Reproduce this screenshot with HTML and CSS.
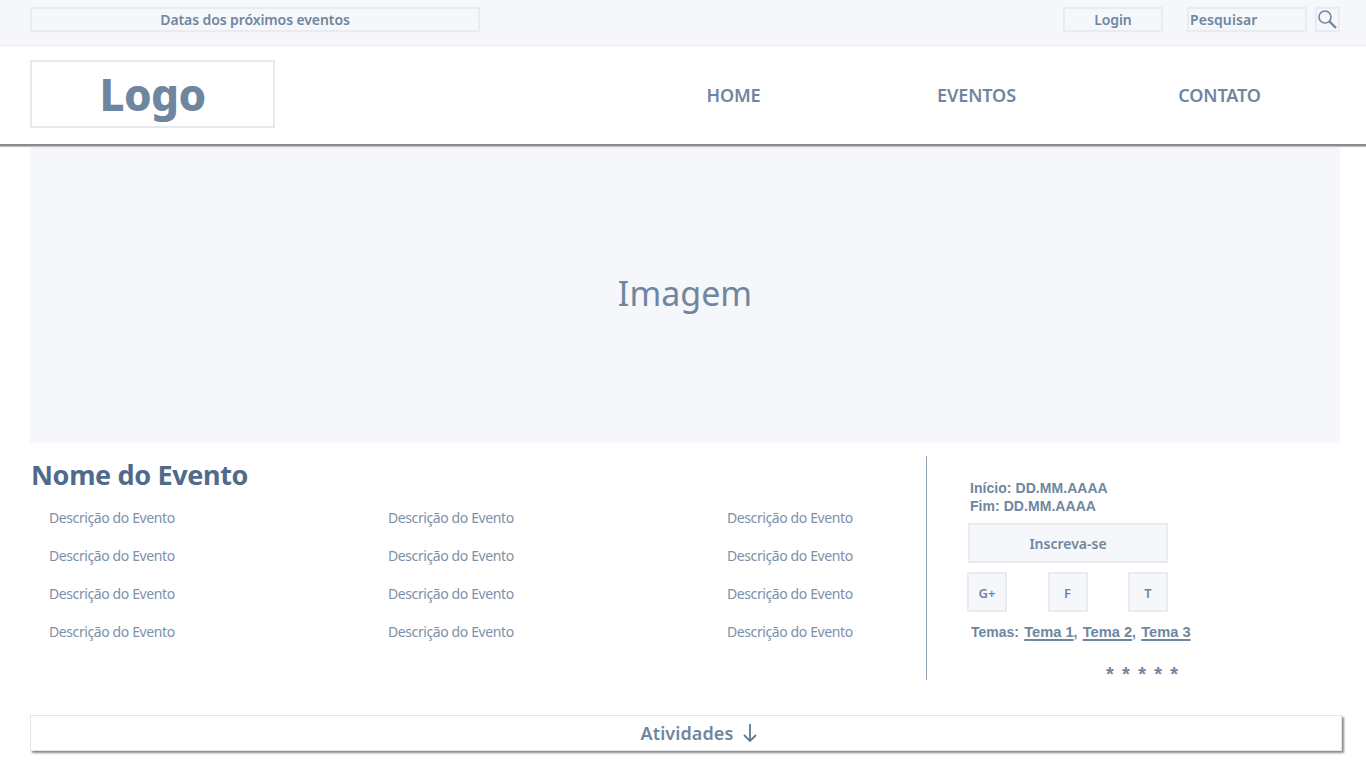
FILE: index.html
```html
<!DOCTYPE html>
<html lang="pt-BR">
<head>
  <meta charset="UTF-8" />
  <title>Evento</title>
  <link rel="stylesheet" href="styles.css">
</head>
<body>
  <div class="topbar">
    <div class="box dates">Datas dos próximos eventos</div>
    <div class="box login">Login</div>
    <div class="box search">Pesquisar</div>
    <div class="box search-btn">
      <svg width="21" height="21" viewBox="0 0 21 21" fill="none" stroke="#6f88a2">
        <circle cx="8" cy="8" r="6" stroke-width="1.6"/>
        <path d="M12.5 12.5l6.5 6.5" stroke-width="2.4"/>
      </svg>
    </div>
  </div>

  <header class="header">
    <div class="logo">Logo</div>
    <nav class="nav">
      <a>HOME</a>
      <a>EVENTOS</a>
      <a>CONTATO</a>
    </nav>
  </header>

  <div class="hero">Imagem</div>

  <div class="event">
    <div class="event-main">
      <h1>Nome do Evento</h1>
      <div class="desc-grid">
        <span>Descrição do Evento</span><span>Descrição do Evento</span><span>Descrição do Evento</span>
        <span>Descrição do Evento</span><span>Descrição do Evento</span><span>Descrição do Evento</span>
        <span>Descrição do Evento</span><span>Descrição do Evento</span><span>Descrição do Evento</span>
        <span>Descrição do Evento</span><span>Descrição do Evento</span><span>Descrição do Evento</span>
      </div>
    </div>
    <aside class="event-side">
      <p class="dates-info">Início: DD.MM.AAAA<br>Fim: DD.MM.AAAA</p>
      <div class="signup">Inscreva-se</div>
      <div class="social">
        <div class="social-btn">G+</div>
        <div class="social-btn">F</div>
        <div class="social-btn">T</div>
      </div>
      <p class="themes">Temas: <a>Tema 1</a>, <a>Tema 2</a>, <a>Tema 3</a></p>
      <div class="stars">* * * * *</div>
    </aside>
  </div>

  <div class="activities">
    Atividades
    <svg width="16" height="20" viewBox="0 0 16 20" fill="none" stroke="#5d7a99" stroke-width="1.8">
      <path d="M8 1v17M2 12l6 6 6-6"/>
    </svg>
  </div>
</body>
</html>
```

FILE: styles.css
```css
* {
  box-sizing: border-box;
}
body {
  margin: 0;
  height: 768px;
  overflow: hidden;
  background: #fff;
  color: #6f86a0;
  font-family: 'Noto Sans', sans-serif;
}
.topbar {
  display: flex;
  align-items: flex-start;
  height: 46px;
  padding: 7px 26px 0 30px;
  background: #f5f7fb;
  border-bottom: 1px solid #e8ebef;
}
.box {
  height: 25px;
  border: 2px solid #e8ebf1;
  font-size: 14px;
  font-weight: 600;
  line-height: 21px;
  letter-spacing: -0.1px;
  text-align: center;
}
.dates {
  width: 450px;
}
.login {
  width: 100px;
  margin-left: auto;
}
.search {
  width: 120px;
  margin-left: 24px;
  padding-left: 1px;
  letter-spacing: 0.1px;
  text-align: left;
}
.search-btn {
  width: 25px;
  margin-left: 8px;
  line-height: 0;
}
.header {
  display: flex;
  align-items: center;
  height: 100px;
  padding: 0 0 0 30px;
  background: #fff;
  border-bottom: 2px solid #8a8a8a;
  box-shadow: 0 1px 1px #c4c4c4;
  position: relative;
}
.logo {
  width: 245px;
  height: 68px;
  margin-top: -3px;
  border: 2px solid #e6eaef;
  font-size: 44px;
  font-weight: 800;
  line-height: 64px;
  letter-spacing: -0.6px;
  text-align: center;
}
.nav {
  display: flex;
  margin-left: 337px;
  margin-top: -1px;
}
.nav a {
  width: 243px;
  font-size: 18px;
  font-weight: 600;
  letter-spacing: -0.1px;
  text-align: center;
}
.hero {
  display: flex;
  align-items: center;
  justify-content: center;
  height: 297px;
  margin: 0 26px 0 30px;
  padding-bottom: 4px;
  background: #f5f7fb;
  font-size: 34px;
}
.event {
  display: flex;
  height: 224px;
  margin: 13px 0 0 30px;
}
.event-main {
  width: 897px;
  border-right: 1px solid #8fa3b8;
}
.event-main h1 {
  margin: 0;
  padding: 1px 0 0 1px;
  color: #4f6a8a;
  font-size: 27px;
  font-weight: 700;
  line-height: 36px;
  letter-spacing: -0.35px;
}
.desc-grid {
  display: grid;
  grid-template-columns: repeat(3, 339px);
  grid-auto-rows: 38px;
  padding: 13px 0 0 19px;
  font-size: 14px;
  line-height: 24px;
  letter-spacing: -0.4px;
  color: #7d90a8;
}
.event-side {
  width: 300px;
  padding: 0 0 0 41px;
  font-family: 'Liberation Sans', sans-serif;
  font-weight: 700;
}
.dates-info {
  margin: 23px 0 8px 2px;
  font-size: 14px;
  line-height: 18px;
  letter-spacing: 0.05px;
}
.signup {
  width: 200px;
  height: 40px;
  background: #f5f7fb;
  border: 2px solid #e8ebf1;
  font-family: 'Noto Sans', sans-serif;
  font-size: 14px;
  font-weight: 600;
  line-height: 38px;
  text-align: center;
}
.social {
  display: flex;
  justify-content: space-between;
  width: 201px;
  margin: 9px 0 0 -1px;
}
.social-btn {
  width: 40px;
  height: 40px;
  background: #f5f7fb;
  border: 2px solid #e8ebf1;
  font-family: 'Noto Sans', sans-serif;
  font-size: 13px;
  font-weight: 600;
  line-height: 38px;
  text-align: center;
}
.themes {
  margin: 11px 0 0 3px;
  font-size: 14px;
  line-height: 18px;
}
.themes a {
  margin-left: 1.3px;
  font-size: 14.67px;
  text-decoration: underline;
  text-decoration-thickness: 2px;
  text-underline-offset: 2px;
}
.stars {
  margin: 23px 0 0 138px;
  font-size: 20px;
  line-height: 20px;
  word-spacing: 2.75px;
}
.activities {
  display: flex;
  align-items: center;
  justify-content: center;
  gap: 9px;
  width: 1312px;
  height: 36px;
  margin: 35px 0 0 30px;
  padding-left: 27px;
  background: #fff;
  border: 1px solid #e6e6e6;
  box-shadow: 2px 2px 2px #8a8a8a;
  font-size: 18px;
  font-weight: 600;
  letter-spacing: 0.1px;
}
```
